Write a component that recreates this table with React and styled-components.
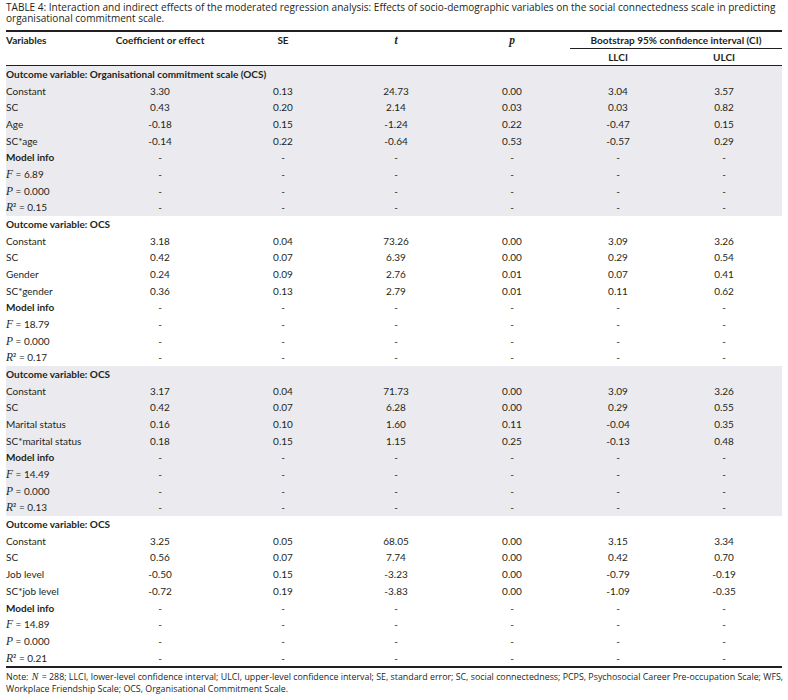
import React from "react";
import styled, { createGlobalStyle } from "styled-components";

const Global = createGlobalStyle`
  body {
    margin: 0;
    background: #ffffff;
    color: #231f20;
    font-family: Lato, "Liberation Sans", sans-serif;
  }
`;

const Page = styled.div`
  width: 788px;
  padding: 2px 6px 0;
  box-sizing: border-box;
`;

const Caption = styled.div`
  font-family: "Open Sans", "Liberation Sans", sans-serif;
  font-size: 10.05px;
  line-height: 11px;
  margin-bottom: 6px;
  white-space: nowrap;
`;

const Table = styled.table`
  width: 776px;
  border-collapse: collapse;
  table-layout: fixed;
  border-top: 2px solid #231f20;
  border-bottom: 2px solid #231f20;
  font-size: 10px;
`;

const Th = styled.th`
  font-weight: 700;
  text-align: ${(p) => (p.$left ? "left" : "center")};
  vertical-align: top;
  padding: 2px 0 0;
  height: 14px;
  line-height: 12px;
`;

const HeadRow = styled.tr`
  border-bottom: ${(p) => (p.$last ? "1px solid #231f20" : "none")};
`;

const CiHead = styled.th`
  font-weight: 700;
  text-align: center;
  padding: 2px 0 2px;
  line-height: 12px;
  border-bottom: 1px solid #231f20;
`;

const Row = styled.tr`
  background: ${(p) => (p.$shade ? "#ebebef" : "#ffffff")};
  height: 16.67px;
`;

const Td = styled.td`
  padding: 0;
  line-height: 16.67px;
  white-space: nowrap;
  text-align: ${(p) => (p.$left ? "left" : "center")};
  font-weight: ${(p) => (p.$bold ? 700 : 400)};
`;

const Math = styled.i`
  font-family: "Liberation Serif", serif;
  font-size: ${(p) => p.$size || "11.5px"};
  line-height: 1;
  margin: ${(p) => (p.$gap ? "0 1px" : "0")};
`;

const Note = styled.div`
  font-family: "Open Sans", "Liberation Sans", sans-serif;
  font-size: 8.85px;
  line-height: 12px;
  margin-top: 3px;
  white-space: nowrap;
`;

const groups = [
  {
    title: "Outcome variable: Organisational commitment scale (OCS)",
    rows: [
      ["Constant", "3.30", "0.13", "24.73", "0.00", "3.04", "3.57"],
      ["SC", "0.43", "0.20", "2.14", "0.03", "0.03", "0.82"],
      ["Age", "-0.18", "0.15", "-1.24", "0.22", "-0.47", "0.15"],
      ["SC*age", "-0.14", "0.22", "-0.64", "0.53", "-0.57", "0.29"],
    ],
    f: "6.89",
    r: "0.15",
  },
  {
    title: "Outcome variable: OCS",
    rows: [
      ["Constant", "3.18", "0.04", "73.26", "0.00", "3.09", "3.26"],
      ["SC", "0.42", "0.07", "6.39", "0.00", "0.29", "0.54"],
      ["Gender", "0.24", "0.09", "2.76", "0.01", "0.07", "0.41"],
      ["SC*gender", "0.36", "0.13", "2.79", "0.01", "0.11", "0.62"],
    ],
    f: "18.79",
    r: "0.17",
  },
  {
    title: "Outcome variable: OCS",
    rows: [
      ["Constant", "3.17", "0.04", "71.73", "0.00", "3.09", "3.26"],
      ["SC", "0.42", "0.07", "6.28", "0.00", "0.29", "0.55"],
      ["Marital status", "0.16", "0.10", "1.60", "0.11", "-0.04", "0.35"],
      ["SC*marital status", "0.18", "0.15", "1.15", "0.25", "-0.13", "0.48"],
    ],
    f: "14.49",
    r: "0.13",
  },
  {
    title: "Outcome variable: OCS",
    rows: [
      ["Constant", "3.25", "0.05", "68.05", "0.00", "3.15", "3.34"],
      ["SC", "0.56", "0.07", "7.74", "0.00", "0.42", "0.70"],
      ["Job level", "-0.50", "0.15", "-3.23", "0.00", "-0.79", "-0.19"],
      ["SC*job level", "-0.72", "0.19", "-3.83", "0.00", "-1.09", "-0.35"],
    ],
    f: "14.89",
    r: "0.21",
  },
];

const dashes = ["-", "-", "-", "-", "-", "-"];

function InfoRow({ shade, label, bold }) {
  return (
    <Row $shade={shade}>
      <Td $left $bold={bold}>{label}</Td>
      {dashes.map((d, i) => (
        <Td key={i}>{d}</Td>
      ))}
    </Row>
  );
}

export default function App() {
  return (
    <Page>
      <Global />
      <Caption>
        TABLE 4: Interaction and indirect effects of the moderated regression analysis: Effects of socio-demographic
        variables on the social connectedness scale in predicting
        <br />
        organisational commitment scale.
      </Caption>
      <Table>
        <colgroup>
          <col style={{ width: 86 }} />
          <col style={{ width: 136 }} />
          <col style={{ width: 110 }} />
          <col style={{ width: 116 }} />
          <col style={{ width: 116 }} />
          <col style={{ width: 96 }} />
          <col style={{ width: 116 }} />
        </colgroup>
        <thead>
          <HeadRow>
            <Th $left rowSpan={2}>Variables</Th>
            <Th rowSpan={2}>Coefficient or effect</Th>
            <Th rowSpan={2}>SE</Th>
            <Th rowSpan={2}><Math>t</Math></Th>
            <Th rowSpan={2}><Math>p</Math></Th>
            <CiHead colSpan={2}>Bootstrap 95% confidence interval (CI)</CiHead>
          </HeadRow>
          <HeadRow $last>
            <Th>LLCI</Th>
            <Th>ULCI</Th>
          </HeadRow>
        </thead>
        <tbody>
          {groups.map((g, gi) => {
            const shade = gi % 2 === 0;
            return (
              <React.Fragment key={gi}>
                <Row $shade={shade}>
                  <Td $left $bold colSpan={7}>{g.title}</Td>
                </Row>
                {g.rows.map((r, ri) => (
                  <Row $shade={shade} key={ri}>
                    {r.map((c, ci) => (
                      <Td key={ci} $left={ci === 0}>{c}</Td>
                    ))}
                  </Row>
                ))}
                <InfoRow shade={shade} bold label="Model info" />
                <InfoRow shade={shade} label={<><Math>F</Math> = {g.f}</>} />
                <InfoRow shade={shade} label={<><Math>P</Math> = 0.000</>} />
                <InfoRow shade={shade} label={<><Math>R</Math>² = {g.r}</>} />
              </React.Fragment>
            );
          })}
        </tbody>
      </Table>
      <Note>
        Note: <Math $size="10px" $gap>N</Math> = 288; LLCI, lower-level confidence interval; ULCI, upper-level confidence interval; SE, standard error; SC, social connectedness; PCPS, Psychosocial Career Pre-occupation Scale; WFS,
        <br />
        Workplace Friendship Scale; OCS, Organisational Commitment Scale.
      </Note>
    </Page>
  );
}
